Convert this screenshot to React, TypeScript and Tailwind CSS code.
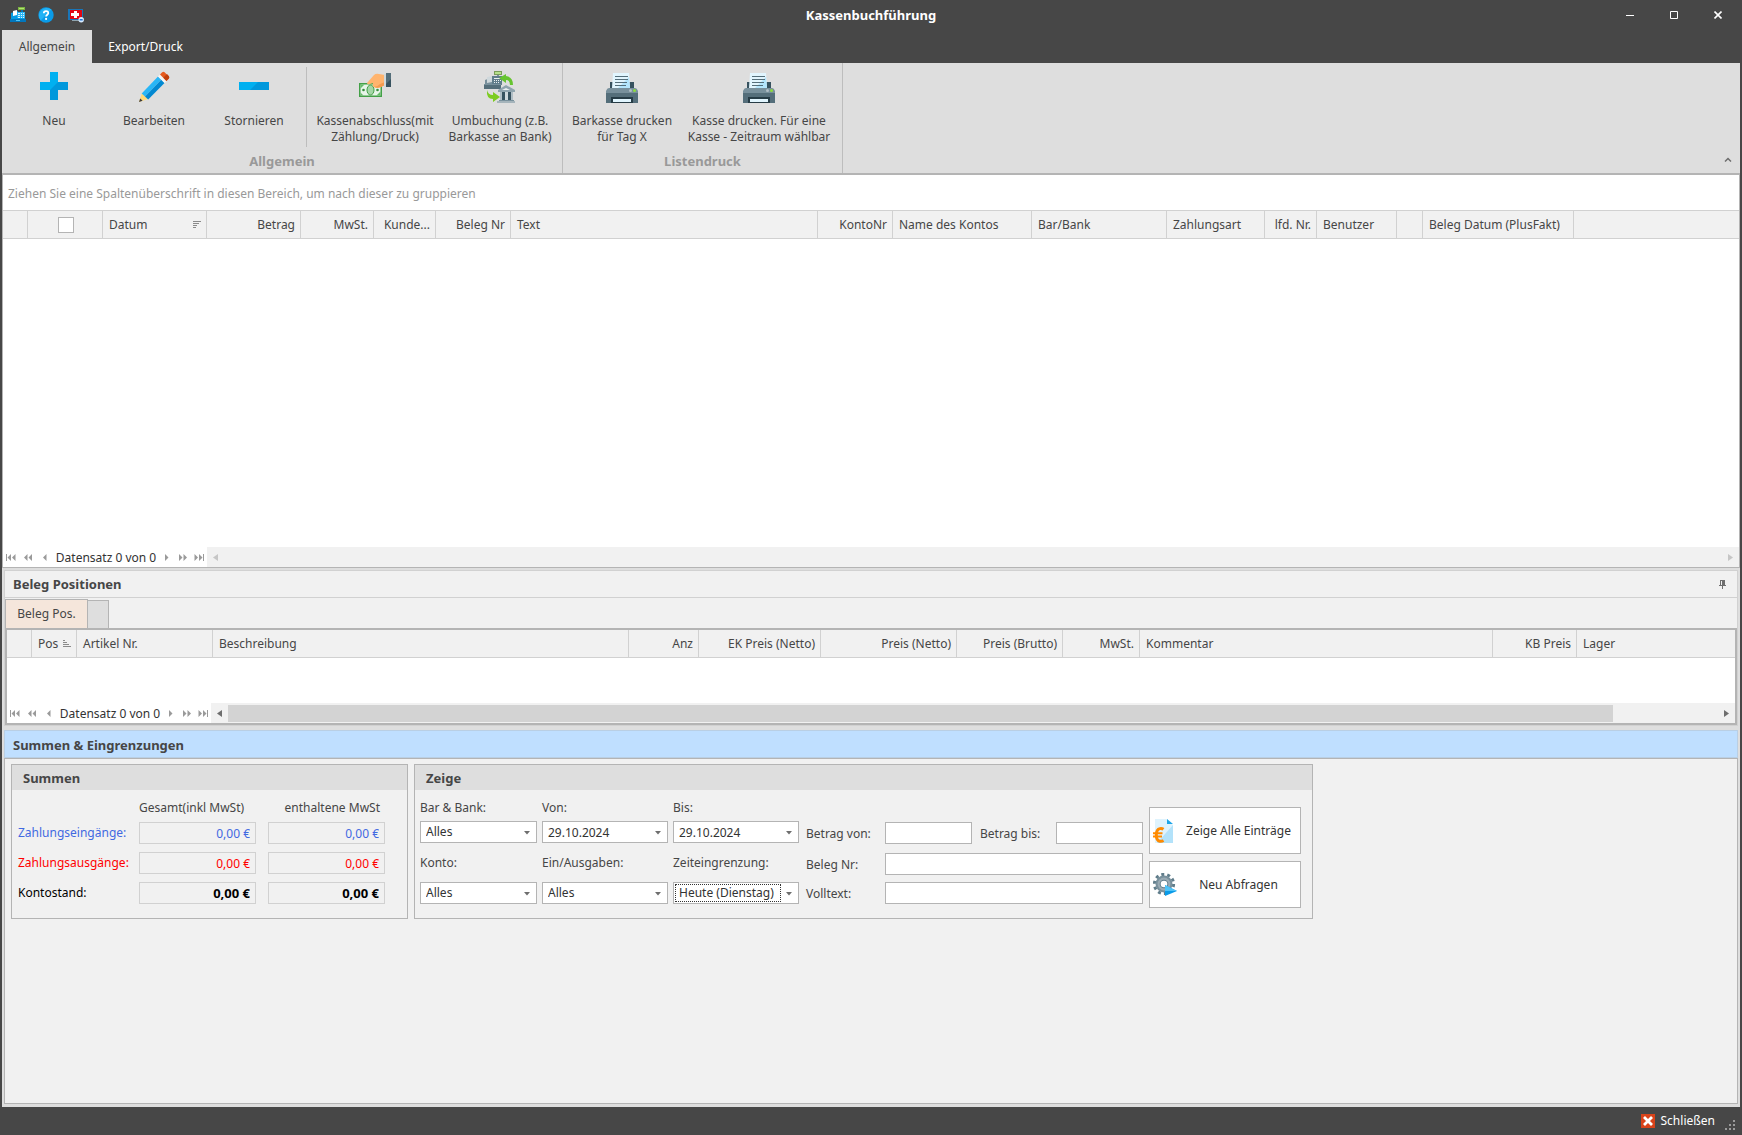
import type { ReactNode } from "react";

type Column = {
  title: string;
  width: string;
  right?: boolean;
  sort?: "asc" | "desc";
  check?: boolean;
};

const bookingColumns: Column[] = [
  { title: "", width: "w-[25px]" },
  { title: "", width: "w-[75px]", check: true },
  { title: "Datum", width: "w-[104px]", sort: "desc" },
  { title: "Betrag", width: "w-[94px]", right: true },
  { title: "MwSt.", width: "w-[73px]", right: true },
  { title: "Kunde...", width: "w-[62px]", right: true },
  { title: "Beleg Nr", width: "w-[75px]", right: true },
  { title: "Text", width: "w-[307px]" },
  { title: "KontoNr", width: "w-[75px]", right: true },
  { title: "Name des Kontos", width: "w-[139px]" },
  { title: "Bar/Bank", width: "w-[135px]" },
  { title: "Zahlungsart", width: "w-[98px]" },
  { title: "lfd. Nr.", width: "w-[52px]", right: true },
  { title: "Benutzer", width: "w-[80px]" },
  { title: "", width: "w-[26px]" },
  { title: "Beleg Datum (PlusFakt)", width: "w-[151px]" },
  { title: "", width: "" },
];

const positionColumns: Column[] = [
  { title: "", width: "w-[25px]" },
  { title: "Pos", width: "w-[45px]", sort: "asc" },
  { title: "Artikel Nr.", width: "w-[136px]" },
  { title: "Beschreibung", width: "w-[416px]" },
  { title: "Anz", width: "w-[70px]", right: true },
  { title: "EK Preis (Netto)", width: "w-[122px]", right: true },
  { title: "Preis (Netto)", width: "w-[136px]", right: true },
  { title: "Preis (Brutto)", width: "w-[106px]", right: true },
  { title: "MwSt.", width: "w-[77px]", right: true },
  { title: "Kommentar", width: "w-[353px]" },
  { title: "KB Preis", width: "w-[84px]", right: true },
  { title: "Lager", width: "" },
];

function RegisterIcon() {
  return (
    <svg width="16" height="16" viewBox="0 0 16 16">
      <path d="M8 0h7v3H8z" fill="#7cb342" />
      <path d="M9 1h5v1H9z" fill="#aee571" />
      <path d="M11 3h2v2h-2z" fill="#0277bd" />
      <path d="M1 6l7-2v7H1z" fill="#039be5" />
      <path d="M3 4l4-1v5l-4 1z" fill="#fff" />
      <path d="M7 5h8v7H7z" fill="#29b6f6" />
      <path d="M8 6h2v1H8zM11 6h1v1h-1zM13 6h1v1h-1zM8 8h2v1H8zM11 8h1v1h-1zM13 8h1v1h-1zM8 10h2v1H8zM11 10h1v1h-1zM13 10h1v1h-1z" fill="#e1f5fe" />
      <path d="M0 12h16v3H0z" fill="#0277bd" />
      <path d="M1 11h14v1H1z" fill="#039be5" />
      <path d="M6 13h4v1H6z" fill="#4fc3f7" />
    </svg>
  );
}

function HelpIcon() {
  return (
    <svg width="16" height="16" viewBox="0 0 16 16">
      <circle cx="8" cy="8" r="7.7" fill="#0a9be8" />
      <path d="M2.6 13.4A7.7 7.7 0 0 1 13.4 2.6z" fill="#22b2f5" />
      <path d="M5.8 6.2C5.8 3.4 10.3 3.4 10.3 6c0 1.7-2.2 1.8-2.2 3.6" fill="none" stroke="#fff" strokeWidth="1.8" />
      <circle cx="8.1" cy="11.9" r="1.1" fill="#fff" />
    </svg>
  );
}

function SupportIcon() {
  return (
    <svg width="16" height="16" viewBox="0 0 16 16">
      <path d="M0 2h15v11H0z" fill="#1976b8" />
      <path d="M4 13h7v1H4z" fill="#90a4ae" />
      <path d="M2 3h12v9H2z" fill="#e30613" />
      <path d="M6 4h3v2h2v3H9v2H6V9H3V6h3z" fill="#fff" />
      <circle cx="13.2" cy="12.8" r="2.7" fill="#d9ecff" />
      <path d="M11.700 12h3v1.500h-3z" fill="#1e73d8" />
    </svg>
  );
}

function PlusIcon() {
  return (
    <svg width="32" height="32" viewBox="0 0 32 32">
      <path d="M12 1h8v10h10v8H20v10h-8V19H2v-8h10z" fill="#0098dc" />
      <path d="M12 1h8v10l-8 8H2v-8h10z" fill="#00b0f0" />
    </svg>
  );
}

function MinusIcon() {
  return (
    <svg width="32" height="32" viewBox="0 0 32 32">
      <path d="M1 11h30v8H1z" fill="#0098dc" />
      <path d="M1 11h19l-8 8H1z" fill="#00b0f0" />
    </svg>
  );
}

function PencilIcon() {
  return (
    <svg width="32" height="32" viewBox="0 0 32 32">
      <path d="M1 31l3-9 6 6z" fill="#ffd978" />
      <path d="M1 31l1.200-3.600 2.400 2.400z" fill="#3c3c3c" />
      <path d="M3.700 22.500L20 5.500l3.300 3.300L7 25.500z" fill="#29b6f6" />
      <path d="M7 25.500L23.300 8.800l3.200 3.200-16.300 16.500z" fill="#0288d1" />
      <path d="M20 5.500l2-2 6.500 6.500-2 2z" fill="#f5f5f5" />
      <path d="M22 3.500l2.200-2.300q1.200-1 2.400 0l4.200 4.200q1 1.200 0 2.400L28.500 10z" fill="#e65a1e" />
      <path d="M25.300 6.700L29 3l1.800 1.900q1 1.200 0 2.400L28.500 10z" fill="#bf3f0c" />
    </svg>
  );
}

function CashHandIcon() {
  return (
    <svg width="32" height="32" viewBox="0 0 32 32">
      <path d="M0 12h23v14H0z" fill="#43a047" />
      <path d="M1.500 13.500h20v11h-20z" fill="#e8f5e9" />
      <path d="M1.500 13.500h4l-4 4zM21.500 24.500h-4l4-4zM1.500 24.500v-3l3 3z" fill="#66bb6a" />
      <ellipse cx="11.500" cy="19" rx="3.500" ry="5" fill="#a5d6a7" stroke="#43a047" />
      <circle cx="4.500" cy="19" r="1.300" fill="#388e3c" />
      <circle cx="18.500" cy="19" r="1.300" fill="#388e3c" />
      <path d="M8 12l7-8q2-2 5-1l6 1v10l-4 2q-4 2-7 0-2-1-1-4l-3 1q-3 1-3-1z" fill="#ffb46e" />
      <path d="M13 15q4 2 8-2l5-2v3l-4 2q-5 2-9-1z" fill="#f59b50" />
      <path d="M25 3h2v13h-2z" fill="#cfd8dc" />
      <path d="M27 2h5v14h-5z" fill="#37525f" />
      <path d="M27 2h5v6l-5 5z" fill="#546e7a" />
    </svg>
  );
}

function TransferIcon() {
  return (
    <svg width="32" height="32" viewBox="0 0 32 32">
      <path d="M10 0h8v4h-8z" fill="#7a9c5a" />
      <path d="M11 1h6v2h-6z" fill="#b5e08a" />
      <path d="M13 4h2v3h-2z" fill="#78909c" />
      <path d="M1 9l8-3v9H1z" fill="#78909c" />
      <path d="M3 6l5-1v6l-5 1z" fill="#cfd8dc" />
      <path d="M8 5h10v9H8z" fill="#607d8b" />
      <path d="M10 7h7v1h-7zM10 9h1v1h-1zM12 9h1v1h-1zM14 9h1v1h-1zM16 9h1v1h-1zM10 11h1v1h-1zM12 11h1v1h-1zM14 11h1v1h-1z" fill="#eceff1" />
      <path d="M0 13h17v5H0z" fill="#546e7a" />
      <path d="M0 13h17v1H0z" fill="#78909c" />
      <path d="M15 7l7-4v2q7 1 7 9h-3q0-5-4-5v3z" fill="#66c430" />
      <path d="M3 19q1 5 6 5v-3l7 5-7 5v-3q-7 0-6-9z" fill="#7dcc22" />
      <path d="M14 19l8-5 9 5v2H14z" fill="#90a4ae" />
      <path d="M18 19l4-2 4 2z" fill="#eceff1" />
      <path d="M16 21h2v8h-2zM27 21h2v8h-2z" fill="#b0bec5" />
      <path d="M18 21h3v8h-3zM24 21h3v8h-3z" fill="#37525f" />
      <path d="M21 21h3v8h-3z" fill="#cfd8dc" />
      <path d="M15 29h15v1H15z" fill="#78909c" />
      <path d="M13 30h18v2H13z" fill="#a5b4bb" />
    </svg>
  );
}

function PrinterIcon() {
  return (
    <svg width="32" height="32" viewBox="0 0 32 32">
      <path d="M4 11h24v7H4z" fill="#37525f" />
      <path d="M7 2h16l1 15H6z" fill="#e1f5fe" />
      <path d="M23 6l1 11H12z" fill="#b3e5fc" />
      <path d="M9 5h13v1H9zM9 8h13v1H9zM9 11h12v1H9zM9 14h11v1H9z" fill="#546e7a" />
      <path d="M3 17q-2 0-3 3v3h32v-3q-1-3-3-3z" fill="#78909c" />
      <path d="M0 22h32v10H0z" fill="#546e7a" />
      <path d="M5 26h22v6H5z" fill="#263c46" />
      <path d="M7 28h18v3H7z" fill="#e1f5fe" />
      <circle cx="24.500" cy="19.500" r="1.500" fill="#b0bec5" />
      <circle cx="28.500" cy="19.500" r="1.500" fill="#8bdc3c" />
    </svg>
  );
}

function EuroPageIcon() {
  return (
    <svg width="24" height="24" viewBox="0 0 24 24">
      <path d="M2 0h12l6 6v18H2z" fill="#dff3fd" />
      <path d="M20 6v18H4z" fill="#b3e2fa" />
      <path d="M14 0v5h6z" fill="#1ea5e8" />
      <path d="M10.500 10.300q-1.600-1.100-3.600-.7Q3.300 10.300 3.300 15.900t3.600 6.300q2 .3 3.600-.7" fill="none" stroke="#ff8a00" strokeWidth="3" />
      <path d="M0 14.200h9.500M0 17.600h9" stroke="#ff8a00" strokeWidth="2" />
    </svg>
  );
}

function GearIcon() {
  return (
    <svg width="24" height="24" viewBox="0 0 24 24">
      <circle cx="11" cy="11" r="9.600" fill="none" stroke="#607d8b" strokeWidth="3" strokeDasharray="3 3.030" />
      <circle cx="11" cy="11" r="8.500" fill="#78909c" />
      <circle cx="11" cy="11" r="6.400" fill="#9aabb4" />
      <circle cx="11" cy="11" r="4.300" fill="#607d8b" />
      <circle cx="11" cy="11" r="3.300" fill="#fff" />
      <path d="M12 12l12 6-12 5z" fill="#0a9be8" />
      <path d="M12 12l12 6H12z" fill="#4fc3f7" />
    </svg>
  );
}

function SortIcon({ dir }: { dir: "asc" | "desc" }) {
  return (
    <svg width="8" height="8" viewBox="0 0 8 8" className="shrink-0">
      {dir === "desc" ? (
        <path d="M0 0h8v1H0zM0 2h6v1H0zM0 4h4v1H0zM0 6h3v1H0z" fill="#8a8a8a" />
      ) : (
        <path d="M0 0h2v1H0zM0 2h4v1H0zM0 4h6v1H0zM0 6h8v1H0z" fill="#8a8a8a" />
      )}
    </svg>
  );
}

function NavButton({ label, width, d }: { label: string; width: string; d: string }) {
  return (
    <button type="button" aria-label={label} className={`${width} flex h-5 shrink-0 items-center justify-center`}>
      <svg width="10" height="7" viewBox="0 0 10 7">
        <path d={d} fill="#9a9a9a" />
      </svg>
    </button>
  );
}

function Navigator({ active }: { active?: boolean }) {
  const arrow = active ? "#6e6e6e" : "#c6c6c6";
  return (
    <div className="flex h-5 text-[#333333]">
      <NavButton label="Erster Datensatz" width="w-4" d="M0 0h1v7H0zM5 0v7L1.500 3.500zM9.500 0v7L6 3.500z" />
      <NavButton label="Seite zurück" width="w-[17px]" d="M4.500 0v7L1 3.500zM9 0v7L5.500 3.500z" />
      <NavButton label="Zurück" width="w-[17px]" d="M6.500 0v7L3 3.500z" />
      <span className="w-[106px] shrink-0 text-center leading-[22px] whitespace-nowrap">Datensatz 0 von 0</span>
      <NavButton label="Weiter" width="w-4" d="M3 0v7l3.500-3.500z" />
      <NavButton label="Seite vor" width="w-4" d="M1 0v7l3.500-3.500zM5.500 0v7L9 3.500z" />
      <NavButton label="Letzter Datensatz" width="w-4" d="M.5 0v7L4 3.500zM5 0v7l3.500-3.500zM9 0h1v7H9z" />
      <div className="flex grow items-center bg-[#f1f1f1]">
        <button type="button" aria-label="Nach links" className="flex w-[17px] shrink-0 justify-center">
          <svg width="5" height="7" viewBox="0 0 5 7">
            <path d="M5 0v7L0 3.500z" fill={arrow} />
          </svg>
        </button>
        <div className="h-[17px] grow">{active && <div className="h-full w-[93%] bg-[#d3d3d3]" />}</div>
        <button type="button" aria-label="Nach rechts" className="flex w-[18px] shrink-0 justify-center">
          <svg width="5" height="7" viewBox="0 0 5 7">
            <path d="M0 0v7l5-3.500z" fill={arrow} />
          </svg>
        </button>
      </div>
    </div>
  );
}

function GridHeader({ columns }: { columns: Column[] }) {
  return (
    <table className="w-full table-fixed border-separate border-spacing-0 bg-[#f1f1f1]">
      <thead>
        <tr>
          {columns.map((col, i) => (
            <th
              key={i}
              scope="col"
              className={`${col.width} ${col.right ? "text-right" : "text-left"} h-7 overflow-hidden border-r border-b border-[#d1d1d1] pr-[5px] pl-[6px] font-normal whitespace-nowrap last:border-r-0`}
            >
              {col.check ? (
                <input
                  type="checkbox"
                  aria-label="Alle auswählen"
                  className="mx-auto block size-4 appearance-none border border-[#b4b4b4] bg-white"
                />
              ) : col.sort ? (
                <span className="flex items-center justify-between">
                  {col.title}
                  <SortIcon dir={col.sort} />
                </span>
              ) : (
                col.title
              )}
            </th>
          ))}
        </tr>
      </thead>
    </table>
  );
}

function RibbonButton({ icon, width, children }: { icon: ReactNode; width: string; children: ReactNode }) {
  return (
    <button type="button" className={`${width} flex h-[84px] shrink-0 flex-col items-center gap-[10px] pt-2 leading-4`}>
      {icon}
      <span className="whitespace-nowrap">{children}</span>
    </button>
  );
}

function GroupBox({ title, className, children }: { title: string; className: string; children: ReactNode }) {
  return (
    <section className={`${className} shrink-0 border border-[#b4b4b4]`}>
      <h3 className="h-[25px] bg-[#dedede] pl-[11px] text-[13px] leading-[26px] font-bold">{title}</h3>
      {children}
    </section>
  );
}

function SumRow({ label, id, color, bold }: { label: string; id: string; color: string; bold?: boolean }) {
  const field = `${bold ? "text-[13px] font-bold" : ""} h-[22px] w-[117px] border border-[#d1d1d1] bg-transparent pr-[5px] text-right`;
  return (
    <div className={`${color} flex items-center`}>
      <label htmlFor={id} className="w-[121px] whitespace-nowrap">
        {label}
      </label>
      <input id={id} readOnly value="0,00 €" className={field} />
      <input aria-label={`${label} enthaltene MwSt`} readOnly value="0,00 €" className={`${field} ml-3`} />
    </div>
  );
}

function Arrow() {
  return (
    <svg width="6" height="4" viewBox="0 0 6 4" className="pointer-events-none absolute top-[9px] right-[6px]">
      <path d="M0 0h6L3 3.500z" fill="#6e6e6e" />
    </svg>
  );
}

function Select({ id, value, focused }: { id: string; value: string; focused?: boolean }) {
  return (
    <div className="relative h-[22px] border border-[#b4b4b4] bg-white text-[#333333]">
      <select
        id={id}
        className={`${focused ? "w-[106px] border border-dotted border-[#333333] pl-[3px]" : "w-[98%] pl-1"} m-px block h-[18px] appearance-none leading-4 outline-none`}
      >
        <option>{value}</option>
      </select>
      <Arrow />
    </div>
  );
}

function DateBox({ id }: { id: string }) {
  return (
    <div className="relative h-[22px] border border-[#b4b4b4] bg-white text-[#333333]">
      <input id={id} defaultValue="29.10.2024" className="block h-5 w-full bg-transparent pl-[5px] outline-none" />
      <Arrow />
    </div>
  );
}

const textBox = "h-[22px] w-full border border-[#b4b4b4] bg-white px-1 text-[#333333] outline-none";
const bigButton = "flex h-[47px] w-[152px] items-center border border-[#b4b4b4] bg-white pl-[3px] text-[#333333]";

function TitleBar() {
  return (
    <header className="grid h-[30px] grid-cols-[1fr_auto_1fr] items-center text-white">
      <div className="flex gap-3 pl-2">
        <RegisterIcon />
        <HelpIcon />
        <span className="pl-[2px]">
          <SupportIcon />
        </span>
      </div>
      <h1 className="text-[13px] font-bold">Kassenbuchführung</h1>
      <div className="flex justify-end">
        <button type="button" aria-label="Minimieren" className="flex h-[30px] w-11 items-center justify-center">
          <svg width="8" height="8">
            <path d="M0 4h8v1H0z" fill="#fff" />
          </svg>
        </button>
        <button type="button" aria-label="Maximieren" className="flex h-[30px] w-11 items-center justify-center">
          <svg width="8" height="8">
            <path d="M.5.5h7v7h-7z" fill="none" stroke="#fff" />
          </svg>
        </button>
        <button type="button" aria-label="Fenster schließen" className="flex h-[30px] w-11 items-center justify-center">
          <svg width="8" height="8">
            <path d="M.5.5l7 7M7.500.5l-7 7" stroke="#fff" strokeWidth="1.600" />
          </svg>
        </button>
      </div>
    </header>
  );
}

function Ribbon() {
  return (
    <div className="flex h-[112px] border-b-2 border-[#b4b4b4] bg-[#dedede]">
      <div className="flex flex-col border-r border-[#bdbdbd]">
        <div className="flex pr-[3px] pl-[2px]">
          <RibbonButton icon={<PlusIcon />} width="w-[100px]">Neu</RibbonButton>
          <RibbonButton icon={<PencilIcon />} width="w-[100px]">Bearbeiten</RibbonButton>
          <RibbonButton icon={<MinusIcon />} width="w-[100px]">Stornieren</RibbonButton>
          <div className="mx-[2px] mt-1 h-20 w-px bg-[#bdbdbd]" />
          <RibbonButton icon={<CashHandIcon />} width="w-[132px]">
            Kassenabschluss(mit
            <br />
            Zählung/Druck)
          </RibbonButton>
          <RibbonButton icon={<TransferIcon />} width="w-[118px]">
            Umbuchung (z.B.
            <br />
            Barkasse an Bank)
          </RibbonButton>
        </div>
        <p className="pt-[6px] text-center text-[13px] leading-4 font-bold text-[#999999]">Allgemein</p>
      </div>
      <div className="flex flex-col border-r border-[#bdbdbd]">
        <div className="flex pr-[5px]">
          <RibbonButton icon={<PrinterIcon />} width="w-[118px]">
            Barkasse drucken
            <br />
            für Tag X
          </RibbonButton>
          <RibbonButton icon={<PrinterIcon />} width="w-[156px]">
            Kasse drucken. Für eine
            <br />
            Kasse - Zeitraum wählbar
          </RibbonButton>
        </div>
        <p className="pt-[6px] text-center text-[13px] leading-4 font-bold text-[#999999]">Listendruck</p>
      </div>
      <button type="button" aria-label="Menüband reduzieren" className="mt-auto ml-auto p-2 pb-[11px]">
        <svg width="8" height="5" viewBox="0 0 8 5">
          <path d="M1 4.500L4 1.500l3 3" fill="none" stroke="#6e6e6e" strokeWidth="1.500" />
        </svg>
      </button>
    </div>
  );
}

function Filters() {
  return (
    <GroupBox title="Zeige" className="w-[899px]">
      <div className="flex pt-[5px] pb-[10px] pl-[5px]">
        <div className="grid grid-cols-[117px_126px_126px] grid-rows-[26px_22px_39px_22px] items-center gap-x-[5px]">
          <label htmlFor="barBank">Bar &amp; Bank:</label>
          <label htmlFor="von">Von:</label>
          <label htmlFor="bis">Bis:</label>
          <Select id="barBank" value="Alles" />
          <DateBox id="von" />
          <DateBox id="bis" />
          <label htmlFor="konto">Konto:</label>
          <label htmlFor="einAus">Ein/Ausgaben:</label>
          <label htmlFor="zeit">Zeiteingrenzung:</label>
          <Select id="konto" value="Alles" />
          <Select id="einAus" value="Alles" />
          <Select id="zeit" value="Heute (Dienstag)" focused />
        </div>
        <div className="ml-[7px] grid grid-cols-[79px_87px_84px_87px] grid-rows-[31px_29px_22px] pt-[27px] leading-6 whitespace-nowrap">
          <label htmlFor="betragVon">Betrag von:</label>
          <input id="betragVon" className={textBox} />
          <label htmlFor="betragBis" className="pl-2">
            Betrag bis:
          </label>
          <input id="betragBis" className={textBox} />
          <label htmlFor="belegNr">Beleg Nr:</label>
          <input id="belegNr" className={`${textBox} col-span-3`} />
          <label htmlFor="volltext">Volltext:</label>
          <input id="volltext" className={`${textBox} col-span-3`} />
        </div>
        <div className="ml-[6px] flex flex-col gap-[7px] pt-3">
          <button type="button" className={bigButton}>
            <EuroPageIcon />
            <span className="grow text-center">Zeige Alle Einträge</span>
          </button>
          <button type="button" className={bigButton}>
            <GearIcon />
            <span className="grow text-center">Neu Abfragen</span>
          </button>
        </div>
      </div>
    </GroupBox>
  );
}

export default function App() {
  return (
    <div className="flex min-h-screen flex-col bg-[#474747] px-[2px] font-['Noto_Sans','DejaVu_Sans',sans-serif] text-[12px] leading-4 text-[#464646]">
      <TitleBar />
      <nav className="flex h-[33px]">
        <button type="button" className="w-[90px] bg-[#dedede]">
          Allgemein
        </button>
        <button type="button" className="w-[107px] text-white">
          Export/Druck
        </button>
      </nav>
      <Ribbon />

      <section className="border border-t-0 border-[#b4b4b4] bg-white">
        <p className="h-9 border-b border-[#d1d1d1] pl-[5px] leading-[37px] text-[#999999]">
          Ziehen Sie eine Spaltenüberschrift in diesen Bereich, um nach dieser zu gruppieren
        </p>
        <GridHeader columns={bookingColumns} />
        <div className="h-[308px]" />
        <Navigator />
      </section>

      <main className="flex grow flex-col bg-[#dedede] p-[2px] pb-[3px]">
        <section className="border border-[#d1d1d1] bg-[#f1f1f1]">
          <div className="flex h-[27px] items-center justify-between border-b border-[#d1d1d1] pr-[11px] pl-2">
            <h2 className="text-[13px] font-bold">Beleg Positionen</h2>
            <button type="button" aria-label="Anheften">
              <svg width="7" height="9" viewBox="0 0 7 9">
                <path d="M1 0h5v5h1v1H4v3H3V6H0V5h1zM2 1v4h1V1z" fill="#6e6e6e" fillRule="evenodd" />
              </svg>
            </button>
          </div>
          <div className="flex h-[30px] items-end pt-px">
            <button type="button" className="h-[29px] w-[83px] border border-b-0 border-[#b4b4b4] bg-[#f5e6db]">
              Beleg Pos.
            </button>
            <button
              type="button"
              aria-label="Weitere Positionen"
              className="h-7 w-[21px] border border-b-0 border-l-0 border-[#b4b4b4] bg-[#dedede]"
            />
          </div>
          <div className="border-2 border-[#b4b4b4] bg-white">
            <GridHeader columns={positionColumns} />
            <div className="h-[45px]" />
            <Navigator active />
          </div>
        </section>

        <h2 className="mt-1 h-7 border border-[#b9cfe4] bg-[#bfdfff] pl-2 text-[13px] leading-7 font-bold">
          Summen &amp; Eingrenzungen
        </h2>
        <div className="flex grow items-start gap-[6px] border border-[#b4b4b4] bg-[#f1f1f1] p-[6px] pt-[5px]">
          <GroupBox title="Summen" className="w-[397px]">
            <div className="pt-[10px] pb-[14px] pl-[6px]">
              <div className="flex h-[22px]">
                <span className="ml-[121px] w-[117px]">Gesamt(inkl MwSt)</span>
                <span className="ml-3 w-[117px] pr-[5px] text-right">enthaltene MwSt</span>
              </div>
              <div className="flex flex-col gap-2">
                <SumRow id="eingang" label="Zahlungseingänge:" color="text-[#4169e1]" />
                <SumRow id="ausgang" label="Zahlungsausgänge:" color="text-[#ff0000]" />
                <SumRow id="stand" label="Kontostand:" color="text-black" bold />
              </div>
            </div>
          </GroupBox>
          <Filters />
        </div>
      </main>

      <footer className="flex h-7 items-center justify-end gap-[10px] pr-[5px] text-white">
        <button type="button" className="flex items-center gap-[6px]">
          <svg width="14" height="14" viewBox="0 0 14 14">
            <path d="M0 0h14v14H0z" fill="#d8431a" />
            <path d="M3 3l8 8M11 3l-8 8" stroke="#fff" strokeWidth="2.800" />
          </svg>
          Schließen
        </button>
        <svg width="10" height="10" viewBox="0 0 10 10" className="mt-2">
          <path d="M8 0h2v2H8zM4 4h2v2H4zM8 4h2v2H8zM0 8h2v2H0zM4 8h2v2H4zM8 8h2v2H8z" fill="#9a9a9a" />
        </svg>
      </footer>
    </div>
  );
}
